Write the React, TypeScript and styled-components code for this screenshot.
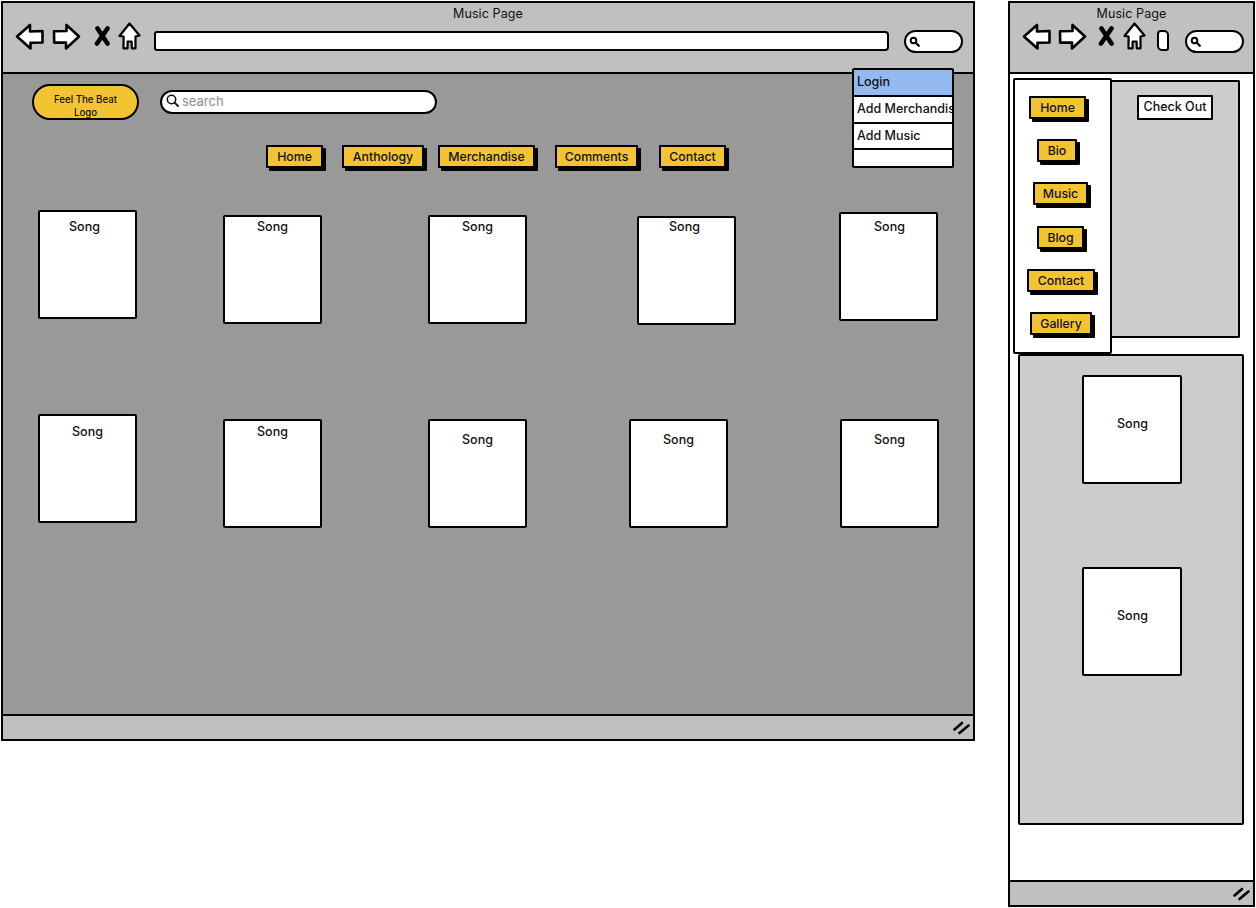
import React from "react";
import styled, { createGlobalStyle } from "styled-components";

const Global = createGlobalStyle`
  html, body { margin: 0; padding: 0; background: #fff; }
  body { font-family: Inter, "Noto Sans", "Liberation Sans", sans-serif; font-size: 13px; color: #111; }
`;

const Desktop = styled.div`
  position: relative;
  width: 1256px;
  height: 908px;
  overflow: hidden;
  background: #fff;
`;

const BrowserWindow = styled.div<{ $x: number; $w: number; $h: number }>`
  position: absolute;
  left: ${(p) => p.$x}px;
  top: 1px;
  width: ${(p) => p.$w}px;
  height: ${(p) => p.$h}px;
  box-sizing: border-box;
  border: 2px solid #000;
  display: flex;
  flex-direction: column;
  background: #fff;
`;

const TopBar = styled.header`
  flex: 0 0 71px;
  box-sizing: border-box;
  background: #c0c0c0;
  border-bottom: 2px solid #000;
  display: flex;
  flex-direction: column;
  align-items: stretch;
`;

const WindowTitle = styled.div`
  height: 21px;
  line-height: 21px;
  text-align: center;
  font-size: 12.5px;
  letter-spacing: 0.1px;
  color: #111;
`;

const Toolbar = styled.div<{ $pad: number }>`
  display: flex;
  align-items: center;
  height: 30px;
  margin-top: -2px;
  padding-left: ${(p) => p.$pad}px;
`;

const ToolIcon = styled.svg<{ $ml?: number; $mt?: number }>`
  display: block;
  flex: none;
  margin-left: ${(p) => p.$ml ?? 0}px;
  margin-top: ${(p) => p.$mt ?? 0}px;
`;

const UrlBar = styled.div<{ $ml: number; $w: number }>`
  flex: none;
  margin-left: ${(p) => p.$ml}px;
  width: ${(p) => p.$w}px;
  height: 20px;
  box-sizing: border-box;
  background: #fff;
  border: 2px solid #000;
  border-radius: 3px 4px 4px 3px;
  margin-top: 8px;
`;

const NarrowUrl = styled.div`
  flex: none;
  margin-left: 11px;
  margin-top: 7px;
  width: 12px;
  height: 21px;
  box-sizing: border-box;
  background: #fff;
  border: 2px solid #000;
  border-radius: 4px 5px 3px 5px;
`;

const ToolSearch = styled.div<{ $ml: number }>`
  flex: none;
  margin-left: ${(p) => p.$ml}px;
  margin-top: 8px;
  width: 59px;
  height: 23px;
  box-sizing: border-box;
  background: #fff;
  border: 2px solid #000;
  border-radius: 12px;
  display: flex;
  align-items: center;
  padding-left: 3px;
`;

const StatusBar = styled.footer`
  flex: 0 0 25px;
  box-sizing: border-box;
  margin-top: auto;
  background: #c0c0c0;
  border-top: 2px solid #000;
  display: flex;
  justify-content: flex-end;
  align-items: center;
  padding: 0 3px 0 0;
`;

const Canvas = styled.main`
  position: relative;
  flex: 1;
  background: #999;
  padding: 10px 0 0 29px;
`;

const HeaderRow = styled.div`
  display: flex;
  align-items: center;
  gap: 21px;
`;

const Logo = styled.div`
  width: 107px;
  height: 36px;
  box-sizing: border-box;
  background: #f3c431;
  border: 2px solid #000;
  border-radius: 18px;
  font-size: 9.7px;
  font-weight: 500;
  line-height: 12.5px;
  text-align: center;
  padding-top: 8px;
  color: #111;
`;

const SearchField = styled.div`
  width: 277px;
  height: 24px;
  box-sizing: border-box;
  background: #fff;
  border: 2px solid #000;
  border-radius: 12px;
  display: flex;
  align-items: center;
  gap: 3px;
  padding: 0 0 2px 4px;
  color: #8c8c98;
  font-size: 13px;
  margin-top: -1px;
`;

const NavRow = styled.nav`
  display: flex;
  margin: 25px 0 0 234px;
`;

const YellowButton = styled.div<{ $w: number; $ml?: number; $h?: number }>`
  flex: none;
  width: ${(p) => p.$w}px;
  height: ${(p) => p.$h ?? 23}px;
  margin-left: ${(p) => p.$ml ?? 0}px;
  box-sizing: border-box;
  background: #f3c431;
  border: 2px solid #000;
  border-radius: 1px;
  box-shadow: 3px 3px 0 #000;
  display: flex;
  align-items: center;
  justify-content: center;
  font-size: 12.3px;
  font-weight: 500;
  color: #111;
`;

const SongCard = styled.div<{ $x: number; $y: number; $lx?: number; $ly: number }>`
  position: absolute;
  left: ${(p) => p.$x}px;
  top: ${(p) => p.$y}px;
  width: 99px;
  height: 109px;
  box-sizing: border-box;
  background: #fff;
  border: 2px solid #000;
  border-radius: 2px;
  text-align: center;
  padding-top: ${(p) => p.$ly}px;
  padding-right: ${(p) => (p.$lx && p.$lx < 0 ? -2 * p.$lx : 0)}px;
  padding-left: ${(p) => (p.$lx && p.$lx > 0 ? 2 * p.$lx : 0)}px;
  line-height: 16px;
  font-size: 12.5px;
  font-weight: 500;
  color: #111;
`;

const Menu = styled.div`
  position: absolute;
  left: 849px;
  top: 65px;
  width: 102px;
  box-sizing: border-box;
  background: #fff;
  border: 2px solid #000;
  border-radius: 2px;
  overflow: hidden;
`;

const MenuItem = styled.div<{ $active?: boolean; $h: number }>`
  height: ${(p) => p.$h}px;
  box-sizing: border-box;
  background: ${(p) => (p.$active ? "#92b9f0" : "#fff")};
  border-bottom: 2px solid #000;
  padding: 0 0 2px 3px;
  display: flex;
  align-items: center;
  white-space: nowrap;
  font-size: 12.5px;
  font-weight: 500;
  color: #111;
  &:last-child { border-bottom: 0; }
`;

const MobileCanvas = styled.main`
  position: relative;
  flex: 1;
  background: #fff;
  padding: 0 0 0 3px;
`;

const MobileTop = styled.div`
  display: flex;
  align-items: flex-start;
  height: 280px;
  padding-top: 4px;
  box-sizing: border-box;
`;

const SideMenu = styled.aside`
  position: relative;
  z-index: 1;
  width: 99px;
  height: 276px;
  box-sizing: border-box;
  background: #fff;
  border: 2px solid #000;
  border-radius: 2px;
  display: flex;
  flex-direction: column;
  align-items: flex-start;
  padding-top: 16px;
  gap: 20.2px;
`;

const CheckoutPanel = styled.section`
  width: 129px;
  height: 258px;
  margin: 2px 0 0 -1px;
  box-sizing: border-box;
  background: #ccc;
  border: 2px solid #000;
  border-left: 0;
  border-radius: 0 2px 2px 0;
  padding: 13px 0 0 26px;
`;

const CheckOut = styled.div`
  width: 76px;
  height: 25px;
  box-sizing: border-box;
  background: #fff;
  border: 2px solid #000;
  border-radius: 1px;
  display: flex;
  align-items: center;
  justify-content: center;
  padding-bottom: 2px;
  font-size: 12.5px;
  font-weight: 500;
  color: #111;
`;

const SongsPanel = styled.section`
  width: 226px;
  height: 471px;
  margin: 0 0 0 5px;
  box-sizing: border-box;
  background: #ccc;
  border: 2px solid #000;
  border-radius: 2px;
  display: flex;
  flex-direction: column;
  align-items: center;
  gap: 83px;
  padding: 19px 0 0 1px;
`;

const MobileSong = styled.div`
  width: 100px;
  height: 109px;
  box-sizing: border-box;
  background: #fff;
  border: 2px solid #000;
  border-radius: 2px;
  display: flex;
  align-items: center;
  justify-content: center;
  padding: 0 0 12px 2px;
  font-size: 12.5px;
  font-weight: 500;
  color: #111;
`;

const stroke = { stroke: "#000", strokeWidth: 2.6, strokeLinejoin: "round" as const, strokeLinecap: "round" as const };

const BackIcon = ({ ml = 0 }: { ml?: number }) => (
  <ToolIcon $ml={ml} $mt={-2} width="29" height="27" viewBox="0 0 29 27">
    <path d="M2 13.5 L15 2 V8.5 L27.5 8 V19.5 L15.5 19.8 V25.5 Z" fill="#fff" {...stroke} />
  </ToolIcon>
);
const ForwardIcon = ({ ml = 0 }: { ml?: number }) => (
  <ToolIcon $ml={ml} $mt={-2} width="29" height="27" viewBox="0 0 29 27">
    <path d="M27 13.5 L14.5 2 V8 L2 8.3 L2.2 19.6 L14 19.6 V25.5 Z" fill="#fff" {...stroke} />
  </ToolIcon>
);
const CloseIcon = ({ ml = 0 }: { ml?: number }) => (
  <ToolIcon $ml={ml} $mt={-3} width="17" height="20" viewBox="0 0 17 20">
    <path d="M3.5 2.5 L13.5 17.5 M13.5 2.5 L3 17.5" fill="none" stroke="#000" strokeWidth="4.6" strokeLinecap="round" />
  </ToolIcon>
);
const HomeIcon = ({ ml = 0 }: { ml?: number }) => (
  <ToolIcon $ml={ml} $mt={-3} width="23" height="28" viewBox="0 0 23 28">
    <path d="M11.5 1.5 L21.5 13.5 L17.5 14.5 L17.5 26.3 L13.8 26.3 L13.6 19.5 L9.6 19.5 L9.6 26.3 L5.5 26.3 L5.6 14.5 L1.5 14 Z" fill="#fff" {...stroke} strokeWidth={2.2} />
  </ToolIcon>
);
const TinySearch = () => (
  <svg width="11" height="11" viewBox="0 0 11 11">
    <circle cx="4.5" cy="4.5" r="2.8" fill="none" stroke="#000" strokeWidth="2" />
    <path d="M6.8 6.8 L9.8 9.8" stroke="#000" strokeWidth="2.2" strokeLinecap="round" />
  </svg>
);
const FieldSearch = () => (
  <svg width="13" height="13" viewBox="0 0 13 13">
    <circle cx="5.5" cy="5.5" r="4.2" fill="none" stroke="#111" strokeWidth="1.5" />
    <path d="M8.6 8.6 L12 12" stroke="#111" strokeWidth="1.8" strokeLinecap="round" />
  </svg>
);
const ResizeIcon = () => (
  <svg width="17" height="14" viewBox="0 0 17 14">
    <path d="M1.5 8.5 L9 2 M6.5 12 L15.5 4.5" fill="none" stroke="#000" strokeWidth="2.6" strokeLinecap="round" />
  </svg>
);

const navItems = [
  { label: "Home", w: 57, ml: 0 },
  { label: "Anthology", w: 82, ml: 19 },
  { label: "Merchandise", w: 97, ml: 14 },
  { label: "Comments", w: 83, ml: 20 },
  { label: "Contact", w: 67, ml: 21 },
];

const songs = [
  { x: 35, y: 136, lx: -3, ly: 7 },
  { x: 220, y: 141, lx: 0, ly: 2 },
  { x: 425, y: 141, lx: 0, ly: 2 },
  { x: 634, y: 142, lx: -2, ly: 1 },
  { x: 836, y: 138, lx: 1, ly: 5 },
  { x: 35, y: 340, lx: 0, ly: 8 },
  { x: 220, y: 345, lx: 0, ly: 3 },
  { x: 425, y: 345, lx: 0, ly: 11 },
  { x: 626, y: 345, lx: 0, ly: 11 },
  { x: 837, y: 345, lx: 0, ly: 11 },
];

const sideItems = [
  { label: "Home", w: 57, ml: 14 },
  { label: "Bio", w: 40, ml: 22 },
  { label: "Music", w: 55, ml: 18 },
  { label: "Blog", w: 47, ml: 22 },
  { label: "Contact", w: 68, ml: 12 },
  { label: "Gallery", w: 62, ml: 15 },
];

export default function App() {
  return (
    <Desktop>
      <Global />
      <BrowserWindow $x={1} $w={974} $h={740}>
        <TopBar>
          <WindowTitle>Music Page</WindowTitle>
          <Toolbar $pad={12}>
            <BackIcon />
            <ForwardIcon ml={8} />
            <CloseIcon ml={13} />
            <HomeIcon ml={7} />
            <UrlBar $ml={13} $w={735} />
            <ToolSearch $ml={15}><TinySearch /></ToolSearch>
          </Toolbar>
        </TopBar>
        <Canvas>
          <HeaderRow>
            <Logo>Feel The Beat<br />Logo</Logo>
            <SearchField><FieldSearch />search</SearchField>
          </HeaderRow>
          <NavRow>
            {navItems.map((n) => (
              <YellowButton key={n.label} $w={n.w} $ml={n.ml}>{n.label}</YellowButton>
            ))}
          </NavRow>
          {songs.map((s, i) => (
            <SongCard key={i} $x={s.x} $y={s.y} $lx={s.lx} $ly={s.ly}>Song</SongCard>
          ))}
        </Canvas>
        <StatusBar><ResizeIcon /></StatusBar>
        <Menu>
          <MenuItem $active $h={27}>Login</MenuItem>
          <MenuItem $h={27}>Add Merchandise</MenuItem>
          <MenuItem $h={26}>Add Music</MenuItem>
          <MenuItem $h={16} />
        </Menu>
      </BrowserWindow>

      <BrowserWindow $x={1008} $w={247} $h={906}>
        <TopBar>
          <WindowTitle>Music Page</WindowTitle>
          <Toolbar $pad={12}>
            <BackIcon />
            <ForwardIcon ml={7} />
            <CloseIcon ml={11} />
            <HomeIcon ml={8} />
            <NarrowUrl />
            <ToolSearch $ml={16}><TinySearch /></ToolSearch>
          </Toolbar>
        </TopBar>
        <MobileCanvas>
          <MobileTop>
            <SideMenu>
              {sideItems.map((s) => (
                <YellowButton key={s.label} $w={s.w} $ml={s.ml}>{s.label}</YellowButton>
              ))}
            </SideMenu>
            <CheckoutPanel><CheckOut>Check Out</CheckOut></CheckoutPanel>
          </MobileTop>
          <SongsPanel>
            <MobileSong>Song</MobileSong>
            <MobileSong>Song</MobileSong>
          </SongsPanel>
        </MobileCanvas>
        <StatusBar><ResizeIcon /></StatusBar>
      </BrowserWindow>
    </Desktop>
  );
}
